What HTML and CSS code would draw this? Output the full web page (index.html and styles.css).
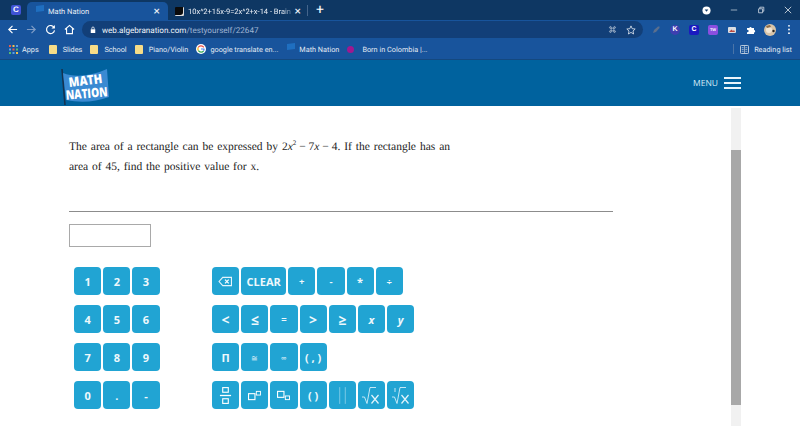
FILE: index.html
```html
<!DOCTYPE html>
<html lang="en">
<head>
    <meta charset="UTF-8">
    <meta name="viewport" content="width=device-width, initial-scale=1.0">
    <title>Math Nation</title>
    <link rel="stylesheet" href="styles.css">
</head>
<body>
    <div class="tabstrip">
        <span class="app-icon">C</span>
        <div class="tab active">
            <svg class="flag" viewBox="0 0 10 9"><path d="M1 1 9 0 9 6 1 7Z" fill="#1f6fc0"/></svg>
            <span class="tab-title">Math Nation</span>
            <span class="tab-close">×</span>
        </div>
        <div class="tab other">
            <span class="brainly-icon"></span>
            <span class="tab-title faded">10x^2+15x-9=2x^2+x-14 - Brain</span>
            <span class="tab-close">×</span>
        </div>
        <span class="tab-sep"></span>
        <span class="new-tab">+</span>
        <div class="window-btns">
            <svg class="profile-dot" viewBox="0 0 10 10"><circle cx="5" cy="5" r="4.5" fill="#fff"/><path d="M3 4H7L5 6.5Z" fill="#123a68"/></svg>
            <svg class="win-icon" viewBox="0 0 10 10"><path d="M1 5H9" stroke="#b9c6d6" fill="none"/></svg>
            <svg class="win-icon" viewBox="0 0 10 10"><path d="M2 3.5H7V8.5H2ZM3.5 3.5V1.5H8.5V6.5H7" stroke="#d5dde7" fill="none"/></svg>
            <svg class="win-icon" viewBox="0 0 10 10"><path d="M1 1 9 9M9 1 1 9" stroke="#e3e8ef" fill="none"/></svg>
        </div>
    </div>

    <div class="toolbar">
        <svg class="nav-icon" viewBox="0 0 12 12"><path d="M11 6H2M6 2 2 6 6 10" stroke="#fff" stroke-width="1.3" fill="none"/></svg>
        <svg class="nav-icon" viewBox="0 0 12 12"><path d="M1 6H10M6 2 10 6 6 10" stroke="#7f9cc6" stroke-width="1.3" fill="none"/></svg>
        <svg class="nav-icon" viewBox="0 0 12 12"><path d="M10 4A4.4 4.4 0 1 0 10.4 7" stroke="#fff" stroke-width="1.3" fill="none"/><path d="M10.8 1V5H7Z" fill="#fff"/></svg>
        <svg class="nav-icon" viewBox="0 0 12 12"><path d="M1 6 6 1.5 11 6M2.8 5V10.5H9.2V5" stroke="#fff" stroke-width="1.2" fill="none"/></svg>
        <div class="omnibox">
            <svg class="lock" viewBox="0 0 8 10"><rect x="1" y="4" width="6" height="5" fill="#fff"/><path d="M2.4 4V2.6A1.6 1.6 0 0 1 5.6 2.6V4" stroke="#fff" fill="none"/></svg>
            <span class="url">web.algebranation.com<span class="url-path">/testyourself/22647</span></span>
            <svg class="omni-icon" viewBox="0 0 10 10"><path d="M3.5 3.5H6.5V6.5H3.5ZM3.5 3.5H2A1 1 0 1 1 3.5 2ZM6.5 3.5V2A1 1 0 1 1 8 3.5ZM6.5 6.5H8A1 1 0 1 1 6.5 8ZM3.5 6.5V8A1 1 0 1 1 2 6.5Z" stroke="#d5dde7" stroke-width=".7" fill="none"/></svg>
            <svg class="omni-icon star" viewBox="0 0 10 10"><path d="M5 .9 6.2 3.7 9.2 4 7 6 7.6 9 5 7.4 2.4 9 3 6 .8 4 3.8 3.7Z" stroke="#e6ebf2" stroke-width=".8" fill="none"/></svg>
        </div>
        <div class="extensions">
            <svg class="ext" viewBox="0 0 10 10"><path d="M2 8 3 5 7 1.5 8.5 1.5 8.5 3 5 7Z" fill="#5a6f8e"/></svg>
            <span class="ext ext-k">K</span>
            <span class="ext ext-c">C</span>
            <span class="ext ext-tw">TW</span>
            <svg class="ext" viewBox="0 0 10 10"><rect x="1" y="2" width="8" height="6" rx="1" fill="#d9dde3"/><path d="M2 7 4.5 4.5 6 6 7 5 8 7Z" fill="#b8483f"/></svg>
            <svg class="ext" viewBox="0 0 10 10"><path d="M1 3H3.4A1.1 1.1 0 1 1 5.6 3H8V5A1.1 1.1 0 1 1 8 7.4V9H1V7A1.1 1.1 0 1 0 1 5Z" fill="#fff"/></svg>
            <svg class="avatar" viewBox="0 0 12 12"><circle cx="6" cy="6" r="6" fill="#d8c4a8"/><circle cx="5" cy="6" r="3" fill="#f1e6d6"/><circle cx="9.5" cy="7" r="1.2" fill="#2c2620"/><path d="M2 2 6 1 7 3 3 4Z" fill="#8f6b45"/></svg>
            <svg class="dots" viewBox="0 0 4 12"><circle cx="2" cy="2" r="1" fill="#fff"/><circle cx="2" cy="6" r="1" fill="#fff"/><circle cx="2" cy="10" r="1" fill="#fff"/></svg>
        </div>
    </div>

    <div class="bookmarks">
        <span class="bm first-bm"><svg class="apps" viewBox="0 0 9 9"><path d="M0 0H2V2H0Z" fill="#e8594a"/><path d="M3.5 0H5.5V2H3.5Z" fill="#f3c14b"/><path d="M7 0H9V2H7Z" fill="#5ba0e8"/><path d="M0 3.5H2V5.5H0Z" fill="#5ba0e8"/><path d="M3.5 3.5H5.5V5.5H3.5Z" fill="#e8594a"/><path d="M7 3.5H9V5.5H7Z" fill="#57b96b"/><path d="M0 7H2V9H0Z" fill="#57b96b"/><path d="M3.5 7H5.5V9H3.5Z" fill="#5ba0e8"/><path d="M7 7H9V9H7Z" fill="#f3c14b"/></svg>Apps</span>
        <span class="bm"><span class="folder"></span>Slides</span>
        <span class="bm"><span class="folder"></span>School</span>
        <span class="bm"><span class="folder"></span>Piano/Violin</span>
        <span class="bm"><svg class="g-icon" viewBox="0 0 10 10"><circle cx="5" cy="5" r="5" fill="#fff"/><path d="M7.8 3.4A3.2 3.2 0 0 0 2.2 3.5" stroke="#e8453c" stroke-width="1.2" fill="none"/><path d="M2.2 3.5A3.2 3.2 0 0 0 2.4 6.7" stroke="#f4b400" stroke-width="1.2" fill="none"/><path d="M2.4 6.7A3.2 3.2 0 0 0 7.6 6.8" stroke="#34a853" stroke-width="1.2" fill="none"/><path d="M5 5H8A3.2 3.2 0 0 1 7.6 6.8" stroke="#4285f4" stroke-width="1.2" fill="none"/></svg>google translate en...</span>
        <span class="bm"><svg class="flag" viewBox="0 0 10 9"><path d="M1 1 9 0 9 6 1 7Z" fill="#1f6fc0"/></svg>Math Nation</span>
        <span class="bm"><span class="dot-pink"></span>Born in Colombia |...</span>
        <span class="bm-sep"></span>
        <span class="bm reading"><svg class="read-icon" viewBox="0 0 10 10"><rect x=".5" y=".5" width="9" height="9" rx="1" stroke="#d5dde7" fill="none"/><path d="M5 1V9M2 3H4M6 3H8M2 5H4M6 5H8M2 7H4M6 7H8" stroke="#d5dde7" stroke-width=".7"/></svg>Reading list</span>
    </div>

    <header class="site-header">
        <svg class="logo" viewBox="0 0 52 38">
            <path d="M3 1 6 37" stroke="#16324f" stroke-width="1.6"/>
            <path d="M4 5C16 10 32 8 48 1L50 29C36 34 22 35 7 32Z" fill="#3a8ad2"/>
            <text class="logo-text" text-anchor="middle" transform="translate(27 17) rotate(-7) scale(.85 1)">MATH</text>
            <text class="logo-text" text-anchor="middle" transform="translate(28 30) rotate(-5) scale(.78 1)">NATION</text>
        </svg>
        <div class="menu">
            <span class="menu-label">MENU</span>
            <span class="burger"><i></i><i></i><i></i></span>
        </div>
    </header>

    <div class="page">
        <main class="content">
            <div class="question">
                <p class="q-line first">The area of a rectangle can be expressed by <span class="math">2<i>x</i><sup>2</sup> − 7<i>x</i> − 4.</span> If the rectangle has an</p>
                <p class="q-line">area of 45, find the positive value for x.</p>
            </div>
            <hr class="rule">
            <div class="answer-box"></div>
            <div class="keypads">
                <div class="pad">
                    <div class="key-row"><button class="key">1</button><button class="key">2</button><button class="key">3</button></div>
                    <div class="key-row"><button class="key">4</button><button class="key">5</button><button class="key">6</button></div>
                    <div class="key-row"><button class="key">7</button><button class="key">8</button><button class="key">9</button></div>
                    <div class="key-row"><button class="key">0</button><button class="key">.</button><button class="key">-</button></div>
                </div>
                <div class="pad">
                    <div class="key-row">
                        <button class="key"><svg class="key-icon" viewBox="0 0 16 12"><path d="M5 1.5H14.5V10.5H5L1 6Z" stroke="#e4f4fb" stroke-width="1.2" fill="none"/><path d="M7.5 4 11.5 8M11.5 4 7.5 8" stroke="#fff" stroke-width="1.4"/></svg></button>
                        <button class="key wide">CLEAR</button>
                        <button class="key small">+</button>
                        <button class="key small">-</button>
                        <button class="key">*</button>
                        <button class="key small">÷</button>
                    </div>
                    <div class="key-row">
                        <button class="key sym">&lt;</button>
                        <button class="key sym">≤</button>
                        <button class="key small">=</button>
                        <button class="key sym">&gt;</button>
                        <button class="key sym">≥</button>
                        <button class="key ital">x</button>
                        <button class="key ital">y</button>
                    </div>
                    <div class="key-row">
                        <button class="key">Π</button>
                        <button class="key tiny">≅</button>
                        <button class="key tiny">∞</button>
                        <button class="key">( , )</button>
                    </div>
                    <div class="key-row">
                        <button class="key"><svg class="key-icon tall" viewBox="0 0 14 20"><rect x="4" y="1.5" width="6" height="5" stroke="#fff" stroke-width="1.2" fill="none"/><path d="M1 10H13" stroke="#fff" stroke-width="1.4"/><rect x="4" y="13.5" width="6" height="5" stroke="#fff" stroke-width="1.2" fill="none"/></svg></button>
                        <button class="key"><svg class="key-icon" viewBox="0 0 16 12"><rect x="1.5" y="4" width="7" height="6.5" stroke="#fff" stroke-width="1.2" fill="none"/><rect x="10" y="1.5" width="4.5" height="4" stroke="#fff" stroke-width="1" fill="none"/></svg></button>
                        <button class="key"><svg class="key-icon" viewBox="0 0 16 12"><rect x="1.5" y="1.5" width="7" height="6.5" stroke="#fff" stroke-width="1.2" fill="none"/><rect x="10" y="6.5" width="4.5" height="4" stroke="#fff" stroke-width="1" fill="none"/></svg></button>
                        <button class="key">( )</button>
                        <button class="key"><svg class="key-icon tall" viewBox="0 0 14 20"><path d="M4 1V19M10 1V19" stroke="#7fcbe6" stroke-width="1"/></svg></button>
                        <button class="key"><svg class="key-icon root" viewBox="0 0 20 20"><path d="M1 12H3.5L6 18.5 9 2.5H15" stroke="#d6eef8" stroke-width=".9" fill="none"/><path d="M10.5 10 17.5 18.5M17.5 10 10.5 18.5" stroke="#e4f4fb" stroke-width="1.2"/></svg></button>
                        <button class="key"><svg class="key-icon root" viewBox="0 0 20 20"><path d="M1 12H3.5L6 18.5 9 2.5H15M4 3V7" stroke="#d6eef8" stroke-width=".9" fill="none"/><path d="M10.5 10 17.5 18.5M17.5 10 10.5 18.5" stroke="#e4f4fb" stroke-width="1.2"/></svg></button>
                    </div>
                </div>
            </div>
        </main>
        <div class="scroll-track"><div class="scroll-thumb"></div></div>
    </div>
</body>
</html>
```

FILE: styles.css
```css
* {
    box-sizing: border-box;
}
html, body {
    margin: 0;
    height: 426px;
    overflow: hidden;
}
body {
    font-family: Roboto, Arial, sans-serif;
    background-color: white;
    text-rendering: geometricPrecision;
}
svg {
    display: block;
    flex: none;
}
.tabstrip {
    height: 20px;
    display: flex;
    align-items: flex-end;
    padding-left: 11px;
    background-color: #0e3763;
    color: #e9eef5;
    font-size: 7.5px;
}
.app-icon {
    width: 10px;
    height: 10px;
    margin: 0 6px 5px 0;
    border-radius: 2px;
    background-color: #4053d6;
    color: white;
    font: bold 8px/10px "Liberation Sans", sans-serif;
    text-align: center;
}
.tab {
    height: 18px;
    display: flex;
    align-items: center;
}
.tab.active {
    width: 141px;
    padding: 0 8px;
    border-radius: 5px 5px 0 0;
    background-color: #18549c;
}
.tab.other {
    width: 139px;
    padding-left: 7px;
    padding-right: 6px;
}
.flag {
    width: 10px;
    height: 9px;
}
.tab.active .flag {
    margin: 0 3px 4px 0;
}
.tab-title {
    flex: 1;
    white-space: nowrap;
    overflow: hidden;
}
.tab-title.faded {
    margin-left: 4px;
    -webkit-mask-image: linear-gradient(to right, black 88%, transparent);
    mask-image: linear-gradient(to right, black 88%, transparent);
}
.tab-close {
    font-size: 12px;
    line-height: 12px;
    color: #e9eef5;
}
.brainly-icon {
    width: 9px;
    height: 9px;
    background-color: #0b0b0b;
    border-radius: 1px;
    flex: none;
    box-shadow: inset -3px -3px 0 -2px #ddd;
}
.tab-sep {
    width: 1px;
    height: 11px;
    margin-bottom: 4px;
    background-color: #44658c;
}
.new-tab {
    margin: 0 0 1px 8px;
    color: white;
    font-size: 14px;
    line-height: 18px;
}
.window-btns {
    display: flex;
    align-items: center;
    margin-left: auto;
    height: 20px;
    padding-right: 8px;
}
.profile-dot {
    width: 9px;
    height: 9px;
    margin-right: 19px;
}
.win-icon {
    width: 8px;
    height: 8px;
    margin-left: 19px;
}
.profile-dot + .win-icon {
    margin-left: 0;
}
.toolbar {
    height: 19px;
    display: flex;
    align-items: center;
    padding-left: 7px;
    background-color: #18549c;
}
.nav-icon {
    width: 11px;
    height: 11px;
    margin-right: 8px;
}
.omnibox {
    width: 561px;
    flex: none;
    height: 17px;
    display: flex;
    align-items: center;
    margin-left: -1px;
    padding: 0 7px 0 8px;
    border-radius: 9px;
    background-color: #123f78;
    font-size: 8.1px;
}
.lock {
    width: 6px;
    height: 8px;
    margin-right: 6px;
}
.url {
    flex: 1;
    color: #f0f4f9;
}
.url-path {
    color: #9fb4d2;
}
.omni-icon {
    width: 9px;
    height: 9px;
}
.omni-icon.star {
    width: 10px;
    height: 10px;
    margin-left: 9px;
}
.extensions {
    display: flex;
    align-items: center;
    gap: 9px;
    margin-left: 8px;
}
.ext {
    width: 10px;
    height: 10px;
    flex: none;
    border-radius: 2px;
    color: white;
    font: bold 7px/10px "Liberation Sans", sans-serif;
    text-align: center;
}
.ext-k {
    background-color: #3d3fb0;
    border-radius: 50%;
}
.ext-c {
    background-color: #1a1ac0;
}
.ext-tw {
    background-color: #8a4fe0;
    font-size: 4px;
}
.avatar {
    width: 12px;
    height: 12px;
    margin-left: -1px;
}
.dots {
    width: 4px;
    height: 11px;
    margin-left: 2px;
}
.bookmarks {
    height: 21px;
    display: flex;
    align-items: center;
    padding-left: 9px;
    background-color: #18549c;
    border-bottom: 1px solid #14487f;
    color: #e4ebf4;
    font-size: 7.3px;
}
.bm {
    display: flex;
    align-items: center;
    white-space: nowrap;
    margin-right: 8px;
}
.first-bm {
    margin-right: 10px;
}
.apps {
    width: 9px;
    height: 9px;
    margin-right: 4px;
}
.folder {
    width: 8px;
    height: 9px;
    margin-right: 6px;
    border-radius: 1px;
    background-color: #f6dc87;
}
.g-icon {
    width: 10px;
    height: 10px;
    margin-right: 4px;
}
.bm .flag {
    margin-right: 3px;
    margin-bottom: 3px;
}
.dot-pink {
    width: 7px;
    height: 7px;
    margin-right: 8px;
    border-radius: 50%;
    background-color: #a0188f;
}
.bm-sep {
    width: 1px;
    height: 10px;
    margin-left: auto;
    margin-right: 6px;
    background-color: #4a74a8;
}
.read-icon {
    width: 9px;
    height: 9px;
    margin-right: 5px;
}
.site-header {
    height: 46px;
    display: flex;
    align-items: center;
    justify-content: space-between;
    padding: 0 59px;
    background-color: #00629e;
}
.logo {
    width: 52px;
    height: 38px;
    margin-top: 8px;
}
.logo-text {
    fill: white;
    font: 800 13px "Open Sans", sans-serif;
}
.menu {
    display: flex;
    align-items: center;
    gap: 6px;
}
.menu-label {
    color: #d6ecf7;
    font-family: "Open Sans", sans-serif;
    font-size: 8.5px;
}
.burger {
    width: 17px;
    display: flex;
    flex-direction: column;
    gap: 3px;
}
.burger i {
    height: 2px;
    background-color: #e8f4fa;
}
.page {
    height: 320px;
    display: flex;
    align-items: flex-start;
    padding-left: 69px;
    padding-top: 2px;
}
.content {
    width: 544px;
    padding-top: 32px;
}
.question {
    width: 381px;
    color: #222;
    font-family: "Liberation Serif", serif;
    font-size: 11.5px;
    word-spacing: 1px;
}
.q-line {
    margin: 0;
    height: 21px;
    line-height: 14px;
}
.q-line.first {
    height: 20px;
    text-align: justify;
    text-align-last: justify;
}
.math {
    display: inline-block;
    word-spacing: 0;
    text-align-last: left;
}
.math sup {
    font-size: 7px;
    line-height: 0;
}
.rule {
    margin: 30px 0 0;
    border: none;
    height: 1px;
    background-color: #8c8c8c;
}
.answer-box {
    width: 82px;
    height: 23px;
    margin-top: 12px;
    border: 1px solid #a9a9a9;
}
.keypads {
    display: flex;
    gap: 52.4px;
    margin-top: 20px;
    padding-left: 5px;
}
.pad {
    display: flex;
    flex-direction: column;
    gap: 10px;
}
.key-row {
    display: flex;
    gap: 2px;
}
.key {
    width: 27.2px;
    height: 28px;
    padding: 0;
    display: flex;
    align-items: center;
    justify-content: center;
    border: none;
    border-radius: 4px;
    background-color: #21a4d3;
    color: #eef8fc;
    font-family: "Open Sans", sans-serif;
    font-size: 11px;
    font-weight: bold;
}
.key.wide {
    width: 45px;
}
.key.small {
    font-size: 9.5px;
}
.key.tiny {
    font-size: 8px;
    font-weight: normal;
}
.key.sym {
    font-size: 14px;
}
.key.ital {
    font-style: italic;
}
.key-icon {
    width: 15px;
    height: 11px;
}
.key-icon.tall {
    width: 13px;
    height: 19px;
}
.key-icon.root {
    width: 20px;
    height: 20px;
}
.scroll-track {
    width: 10px;
    height: 318px;
    margin-left: 118px;
    padding-top: 42px;
    background-color: #f1f1f1;
}
.scroll-thumb {
    height: 255px;
    background-color: #a8a8a8;
}
```
